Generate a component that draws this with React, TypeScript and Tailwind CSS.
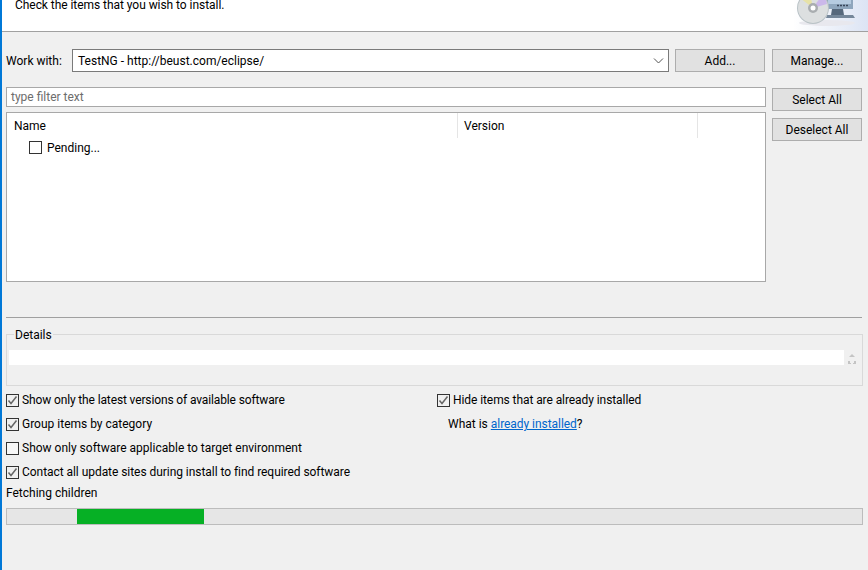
const Check = ({ checked, label, className = '' }: { checked: boolean; label: string; className?: string }) => (
  <div className="flex items-center h-[24px]">
    <div className={`w-[13px] h-[13px] border border-[#333333] shrink-0 ${checked ? 'bg-[#f0f0f0]' : 'bg-[#f8f8f8]'}`}>
      {checked && (
        <svg width="11" height="11" viewBox="0 0 11 11" fill="none">
          <path d="M1.5 5.5 L4 8.5 L9.5 1.5" stroke="#666666" strokeWidth="1.5" />
        </svg>
      )}
    </div>
    <span className={`ml-[3px] whitespace-nowrap ${className}`}>{label}</span>
  </div>
);

const Btn = ({ label, className = '' }: { label: string; className?: string }) => (
  <div className={`w-[90px] h-[23px] bg-[#e1e1e1] border border-[#adadad] flex items-center justify-center ${className}`}>
    {label}
  </div>
);

export default function App() {
  return (
    <div className="w-[868px] h-[570px] overflow-hidden bg-[#f0f0f0] border-l-2 border-[#0078d7] text-[12px] text-black flex flex-col [font-family:Roboto,sans-serif]">
      {/* Banner */}
      <div className="h-[32px] shrink-0 bg-white border-b-[1px] border-[#a0a0a0] flex justify-between">
        <div className="pl-[13px] leading-[11px] tracking-[-0.05px]">Check the items that you wish to install.</div>
        <div className="w-[75px] h-[31px] bg-gradient-to-r from-white to-[#dce4f4]">
          <svg width="75" height="31" viewBox="0 0 75 31">
            <ellipse cx="34" cy="23" rx="28" ry="3" fill="#e8e8ee" />
            <path d="M33 0 H60 V9 H33 Z" fill="#8fa6bd" />
            <path d="M35 0 H58 V4 H35 Z" fill="#b6cbe0" />
            <path d="M44 5.5 h2 M47 5.5 h2 M50 5.5 h2 M53 5.5 h2" stroke="#39465a" strokeWidth="1.5" />
            <path d="M39 9 H50 L51 15 H38 Z" fill="#56687c" />
            <path d="M34 15 H60 L62 18 H33 Z" fill="#75879a" />
            <circle cx="20" cy="8" r="16" fill="#b9c2c6" />
            <circle cx="20" cy="8" r="15" fill="#dcdfe0" />
            <path d="M20 8 L29 -5 A15 15 0 0 1 34 4 Z" fill="#cbb8ea" />
            <path d="M20 8 L7 -2 A15 15 0 0 1 17 -7 Z" fill="#e6e2a8" />
            <circle cx="20" cy="8" r="5" fill="#a9adb0" />
            <circle cx="20" cy="8" r="2.5" fill="#ffffff" />
          </svg>
        </div>
      </div>

      <div className="flex-1 pl-[4px] pr-[6px]">
        {/* Work with */}
        <div className="flex items-center h-[23px] mt-[17px]">
          <span className="w-[66px] shrink-0">Work with:</span>
          <div className="w-[597px] h-[23px] bg-white border border-[#7a7a7a] flex items-center justify-between pl-[5px] pr-[4px]">
            <span>TestNG - http://beust.com/eclipse/</span>
            <svg width="11" height="6" viewBox="0 0 11 6" fill="none">
              <path d="M1 0.5 L5.5 5 L10 0.5" stroke="#555555" strokeWidth="1" />
            </svg>
          </div>
          <Btn label="Add..." className="ml-[6px]" />
          <Btn label="Manage..." className="ml-[7px]" />
        </div>

        <div className="flex mt-[15px]">
          <div className="w-[760px]">
            {/* Filter */}
            <div className="h-[20px] bg-white border border-[#a8a8a8] flex items-center pl-[4px] text-[#6d6d6d]">type filter text</div>
            {/* Tree */}
            <div className="h-[170px] mt-[5px] bg-white border border-[#a8a8a8]">
              <div className="flex h-[25px]">
                <div className="w-[451px] pl-[7px] pt-[4px] border-r border-[#e5e5e5]">Name</div>
                <div className="w-[240px] pl-[6px] pt-[4px] border-r border-[#e5e5e5]">Version</div>
              </div>
              <div className="flex items-center h-[17px] mt-px pl-[22px]">
                <div className="w-[13px] h-[13px] border border-[#333333] bg-white" />
                <span className="ml-[5px]">Pending...</span>
              </div>
            </div>
          </div>
          <div className="ml-[6px] pt-px">
            <Btn label="Select All" />
            <Btn label="Deselect All" className="mt-[7px]" />
          </div>
        </div>

        {/* Separator */}
        <div className="mt-[35px] h-px bg-[#a0a0a0]" />

        {/* Details */}
        <div className="relative mt-[16px] h-[52px] w-[857px] border border-[#d9d9d9] px-[2px] pt-[15px]">
          <span className="absolute left-[7px] -top-[8px] bg-[#f0f0f0] px-px leading-[16px]">Details</span>
          <div className="flex items-start">
            <div className="w-[835px] h-[15px] bg-white" />
            <svg className="ml-[4px] mt-[4px]" width="8" height="10" viewBox="0 0 8 10" fill="#c4c4c4">
              <path d="M4 0 L7 3 H1 Z" />
              <path d="M0 7 H2 V9 H0 Z M6 7 H8 V9 H6 Z M2 9 H3 V10 H0 V9 Z M5 9 H8 V10 H5 Z" />
            </svg>
          </div>
        </div>

        {/* Options */}
        <div className="flex mt-[2px]">
          <div className="w-[431px]">
            <Check checked label="Show only the latest versions of available software" className="tracking-[-0.13px]" />
            <Check checked label="Group items by category" />
            <Check checked={false} label="Show only software applicable to target environment" />
            <Check checked label="Contact all update sites during install to find required software" className="tracking-[-0.05px]" />
          </div>
          <div>
            <Check checked label="Hide items that are already installed" className="tracking-[-0.08px]" />
            <div className="h-[24px] flex items-center pl-[11px]">
              What is&nbsp;<span className="text-[#0066cc] underline tracking-[-0.05px]">already installed</span>?
            </div>
          </div>
        </div>

        <div className="mt-[1px] leading-[16px]">Fetching children</div>

        {/* Progress */}
        <div className="mt-[7px] h-[17px] w-[857px] bg-[#e6e6e6] border border-[#bcbcbc] pl-[70px]">
          <div className="w-[127px] h-[15px] bg-[#06b025]" />
        </div>
      </div>
    </div>
  );
}
